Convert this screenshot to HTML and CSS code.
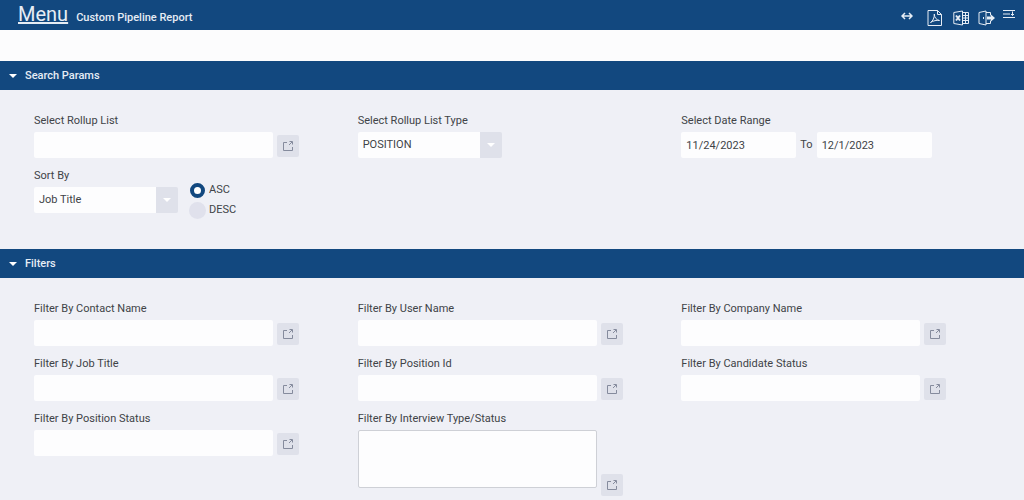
FILE: index.html
```
<!DOCTYPE html>
<html lang="en">
<head>
<meta charset="UTF-8">
<title>Custom Pipeline Report</title>
<link rel="stylesheet" href="styles.css">
</head>
<body>
<svg class="sprite">
	<symbol id="open" viewBox="0 0 12 12">
		<path d="M5 2.500H1.500V10.500H10.500V7M7 5L10 2M7.500 1.500h3V4.500" />
	</symbol>
</svg>
<header class="topbar">
	<a class="menu" href="#">Menu</a>
	<h1>Custom Pipeline Report</h1>
	<div class="tools">
		<button type="button" class="tool resize" aria-label="Resize">
			<svg width="12" height="8" viewBox="0 0 12 8"><path d="M1 4h10M4 1L1 4l3 3M8 1l3 3-3 3" /></svg>
		</button>
		<button type="button" class="tool file" aria-label="PDF">
			<svg width="16" height="18" viewBox="0 0 16 18"><path d="M1 1.500h9.500l4 4V16.500H1zM10.500 1.500v4h4M3.500 13.500c2.500-1.500 4-5 3.800-8.500 0 3.500 2.200 6 5.200 6.500-3-.5-6 .2-9 2z" /></svg>
		</button>
		<button type="button" class="tool file" aria-label="Excel">
			<svg width="16" height="16" viewBox="0 0 16 16"><path d="M9.500 1L.8 2.500v11l8.700 1.500zM9.500 2.500h6v11h-6M12.500 2.500v11M9.500 5.500h6M9.500 8h6M9.500 10.500h6" /><path class="bold" d="M3 5.500l4 5M7 5.500l-4 5" /></svg>
		</button>
		<button type="button" class="tool file exit" aria-label="Exit">
			<svg width="17" height="16" viewBox="0 0 17 16"><path d="M8 1L1 2.500v11L8 15zM8 2.500h4.500v3M12.500 10.500v3H8M5.500 7v2" /><path class="fill" d="M9 6.500h4V4.500L17 8l-4 3.500V9.500H9z" /></svg>
		</button>
		<button type="button" class="tool list" aria-label="Collapse">
			<svg width="12" height="10" viewBox="0 0 12 10"><path d="M0 1.500h12M0 5h7M0 8.500h12M9.500 2.500v4M8 5l1.500 1.500L11 5" /></svg>
		</button>
	</div>
</header>
<form class="report">
	<section>
		<h2 class="bar">Search Params</h2>
		<div class="grid">
			<div class="field">
				<label for="rollup">Select Rollup List</label>
				<div class="line">
					<input type="text" id="rollup">
					<button type="button" class="pick" aria-label="Pick rollup list"><svg><use href="#open" /></svg></button>
				</div>
			</div>
			<div class="field">
				<label for="rollupType">Select Rollup List Type</label>
				<div class="drop">
					<select id="rollupType"><option>POSITION</option></select>
				</div>
			</div>
			<div class="field">
				<label for="dateFrom">Select Date Range</label>
				<div class="line dates">
					<input type="text" id="dateFrom" value="11/24/2023">
					<label for="dateTo">To</label>
					<input type="text" id="dateTo" value="12/1/2023">
				</div>
			</div>
			<div class="sort">
				<div class="field">
					<label for="sortBy">Sort By</label>
					<div class="drop">
						<select id="sortBy"><option>Job Title</option></select>
					</div>
				</div>
				<div class="radios">
					<label><input type="radio" name="order" checked>ASC</label>
					<label><input type="radio" name="order">DESC</label>
				</div>
			</div>
		</div>
	</section>
	<section>
		<h2 class="bar">Filters</h2>
		<div class="grid">
			<div class="field">
				<label for="contact">Filter By Contact Name</label>
				<div class="line">
					<input type="text" id="contact">
					<button type="button" class="pick" aria-label="Pick contact"><svg><use href="#open" /></svg></button>
				</div>
			</div>
			<div class="field">
				<label for="user">Filter By User Name</label>
				<div class="line">
					<input type="text" id="user">
					<button type="button" class="pick" aria-label="Pick user"><svg><use href="#open" /></svg></button>
				</div>
			</div>
			<div class="field">
				<label for="company">Filter By Company Name</label>
				<div class="line">
					<input type="text" id="company">
					<button type="button" class="pick" aria-label="Pick company"><svg><use href="#open" /></svg></button>
				</div>
			</div>
			<div class="field">
				<label for="job">Filter By Job Title</label>
				<div class="line">
					<input type="text" id="job">
					<button type="button" class="pick" aria-label="Pick job title"><svg><use href="#open" /></svg></button>
				</div>
			</div>
			<div class="field">
				<label for="position">Filter By Position Id</label>
				<div class="line">
					<input type="text" id="position">
					<button type="button" class="pick" aria-label="Pick position"><svg><use href="#open" /></svg></button>
				</div>
			</div>
			<div class="field">
				<label for="candidate">Filter By Candidate Status</label>
				<div class="line">
					<input type="text" id="candidate">
					<button type="button" class="pick" aria-label="Pick candidate status"><svg><use href="#open" /></svg></button>
				</div>
			</div>
			<div class="field">
				<label for="status">Filter By Position Status</label>
				<div class="line">
					<input type="text" id="status">
					<button type="button" class="pick" aria-label="Pick position status"><svg><use href="#open" /></svg></button>
				</div>
			</div>
			<div class="field">
				<label for="interview">Filter By Interview Type/Status</label>
				<div class="line area">
					<textarea id="interview"></textarea>
					<button type="button" class="pick" aria-label="Pick interview type"><svg><use href="#open" /></svg></button>
				</div>
			</div>
		</div>
	</section>
</form>
</body>
</html>
```
FILE: styles.css
```
*{margin: 0;padding: 0;box-sizing: border-box;}
body{
	background: #eff0f6;
	color: #404347;
	font: 11px/20px Roboto, sans-serif;
}
input,select,textarea,button{
	font: inherit;
	color: inherit;
	border: 0;
	border-radius: 2px;
}
svg{
	display: block;
	fill: none;
	stroke: currentColor;
}
.sprite{
	display: none;
}
/* header */
.topbar{
	display: flex;
	align-items: baseline;
	gap: 8px;
	height: 30px;
	padding: 2px 9px 0 18px;
	background: #12487f;
	color: #e6edf5;
}
.menu{
	color: inherit;
	font-size: 20px;
	line-height: 24px;
}
.topbar h1,.bar{
	font-size: 11px;
	font-weight: 500;
}
.tools{
	display: flex;
	align-self: stretch;
	align-items: center;
	gap: 10px;
	margin-left: auto;
}
.tool{
	background: none;
}
.resize{
	margin-right: 4px;
	stroke-width: 1.5;
}
.file{
	padding-top: 3px;
}
.exit{
	margin-left: -1px;
}
.list{
	margin-left: -2px;
	padding-bottom: 4px;
}
.tool .bold{
	stroke-width: 2;
}
.tool .fill{
	fill: currentColor;
	stroke: none;
}
/* sections */
.report{
	padding-top: 31px;
	background: linear-gradient(#fcfcfd 31px, transparent 31px);
}
.bar{
	display: flex;
	align-items: center;
	gap: 8px;
	height: 29px;
	padding-left: 9px;
	background: #12487f;
	color: #e6edf5;
}
.bar::before,.drop::after{
	content: "";
	border: 4px solid transparent;
	border-top-color: #fff;
	border-bottom: 0;
}
.grid{
	display: grid;
	grid-template-columns: repeat(3, 1fr);
	row-gap: 7px;
	padding: 20px 19px 36px 34px;
}
.field > label{
	display: block;
	line-height: 22px;
}
.line{
	display: flex;
	align-items: flex-end;
	gap: 4px;
}
.line input,.line textarea,.drop select{
	width: 239px;
	height: 26px;
	padding: 0 5px;
	background: #fdfdfe;
}
.pick{
	display: grid;
	place-items: center;
	width: 22px;
	height: 22px;
	margin-bottom: 1px;
	background: #dfe1ea;
	color: #858b9d;
}
.pick svg{
	width: 12px;
	height: 12px;
}
.dates{
	align-items: center;
}
.line.dates input{
	width: 115px;
}
.line textarea{
	display: block;
	height: 58px;
	border: 1px solid #ced0d6;
	resize: none;
}
.area .pick{
	margin-bottom: -8px;
}
.drop{
	position: relative;
	width: 144px;
}
.drop select{
	display: block;
	width: 100%;
	appearance: none;
	background: linear-gradient(#dfe1ea, #dfe1ea) right / 22px 100% no-repeat #fdfdfe;
}
.drop::after{
	position: absolute;
	top: 11px;
	right: 7px;
	pointer-events: none;
}
.sort{
	display: flex;
	gap: 11px;
}
.radios{
	padding-top: 15px;
	height: 48px;
}
.radios label{
	display: flex;
	align-items: center;
	gap: 3px;
}
.radios input{
	appearance: none;
	width: 17px;
	height: 17px;
	border-radius: 50%;
	background: #e0e1ec;
}
.radios input:checked{
	width: 15px;
	height: 15px;
	margin: 1px;
	border: 4px solid #12487f;
	background: #fff;
}
```
